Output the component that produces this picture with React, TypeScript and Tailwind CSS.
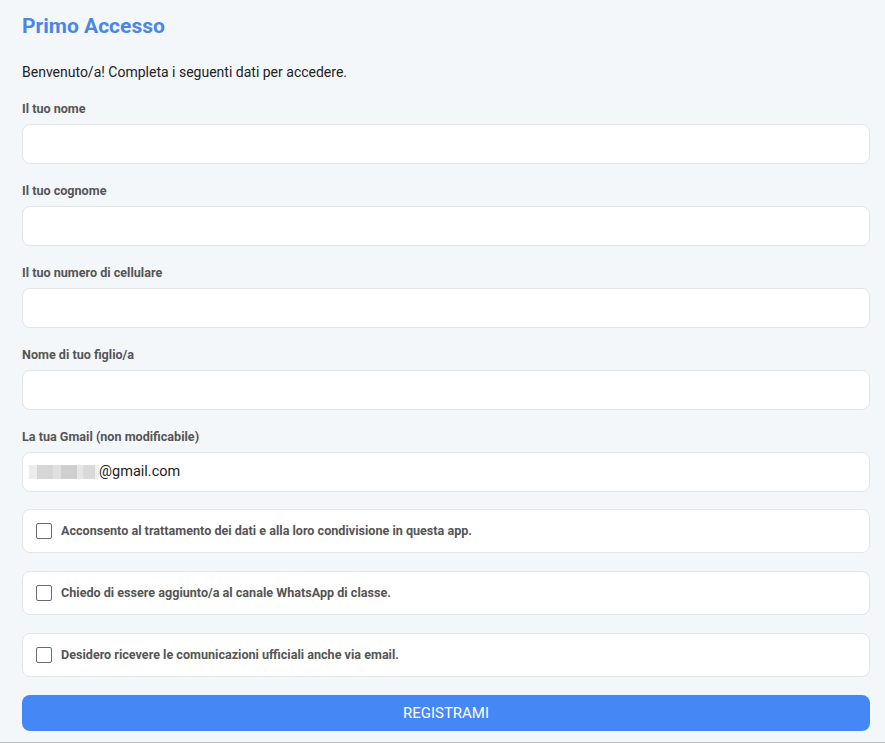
import { useState } from 'react';

// Fields shown in the "Primo Accesso" form
const fields = [
  { id: 'nome', label: 'Il tuo nome' },
  { id: 'cognome', label: 'Il tuo cognome' },
  { id: 'cellulare', label: 'Il tuo numero di cellulare' },
  { id: 'figlio', label: 'Nome di tuo figlio/a' },
];

const consents = [
  { id: 'privacy', label: 'Acconsento al trattamento dei dati e alla loro condivisione in questa app.' },
  { id: 'whatsapp', label: 'Chiedo di essere aggiunto/a al canale WhatsApp di classe.' },
  { id: 'email', label: 'Desidero ricevere le comunicazioni ufficiali anche via email.' },
];

export default function App() {
  const [values, setValues] = useState<Record<string, string>>({});
  const [checked, setChecked] = useState<Record<string, boolean>>({});

  return (
    <div
      className="h-[743px] bg-[#f4f7fa] pl-[22px] pr-[15px] pt-[12px] border-b border-[#bdbdbd] box-border"
      style={{ fontFamily: 'Roboto, "Liberation Sans", sans-serif' }}
    >
      <h1 className="text-[21px] leading-[28px] font-bold text-[#4a86e8] mb-[22px]">Primo Accesso</h1>
      <p className="text-[14px] leading-[20px] text-[#222] mb-[19px]">
        Benvenuto/a! Completa i seguenti dati per accedere.
      </p>

      {fields.map((f) => (
        <div key={f.id} className="mb-[19px]">
          <label htmlFor={f.id} className="block text-[12.6px] leading-[16px] font-bold text-[#555] mb-[7px]">
            {f.label}
          </label>
          <input
            id={f.id}
            value={values[f.id] ?? ''}
            onChange={(e) => setValues({ ...values, [f.id]: e.target.value })}
            className="block w-full h-[40px] rounded-lg border border-[#e3e5e8] bg-white px-[10px] text-[14px] outline-none"
          />
        </div>
      ))}

      <div className="mb-[17px]">
        <label className="block text-[12.6px] leading-[16px] font-bold text-[#555] mb-[7px]">
          La tua Gmail (non modificabile)
        </label>
        <div className="flex items-center w-full h-[40px] rounded-lg border border-[#e3e5e8] bg-white pl-[6px] text-[14.5px] text-[#222]">
          {/* redacted part of the address */}
          <span className="flex items-center h-[14px]">
            <span className="w-[8px] h-[14px] bg-[#ececec]" />
            <span className="w-[16px] h-[14px] bg-[#d6d6d6]" />
            <span className="w-[8px] h-[14px] bg-[#e0e0e0]" />
            <span className="w-[16px] h-[14px] bg-[#cfcfcf]" />
            <span className="w-[6px] h-[14px] bg-[#e6e6e6]" />
            <span className="w-[12px] h-[14px] bg-[#dadada]" />
            <span className="w-[4px] h-[14px] bg-[#f0f0f0]" />
          </span>
          <span>@gmail.com</span>
        </div>
      </div>

      <div className="flex flex-col gap-[18px]">
        {consents.map((c) => (
          <label
            key={c.id}
            className="flex items-center h-[44px] rounded-lg border border-[#e3e5e8] bg-white pl-[13px] cursor-pointer"
          >
            <input
              type="checkbox"
              checked={!!checked[c.id]}
              onChange={(e) => setChecked({ ...checked, [c.id]: e.target.checked })}
              className="appearance-none w-[16px] h-[16px] rounded-[2px] border border-[#6b6b6b] bg-white mr-[9px] shrink-0 checked:bg-[#4285f4] checked:border-[#4285f4]"
            />
            <span className="text-[12.6px] leading-[16px] font-bold text-[#555]">{c.label}</span>
          </label>
        ))}
      </div>

      <button className="mt-[18px] w-full h-[36px] rounded-lg bg-[#4587f5] text-white text-[15px]">
        REGISTRAMI
      </button>
    </div>
  );
}
